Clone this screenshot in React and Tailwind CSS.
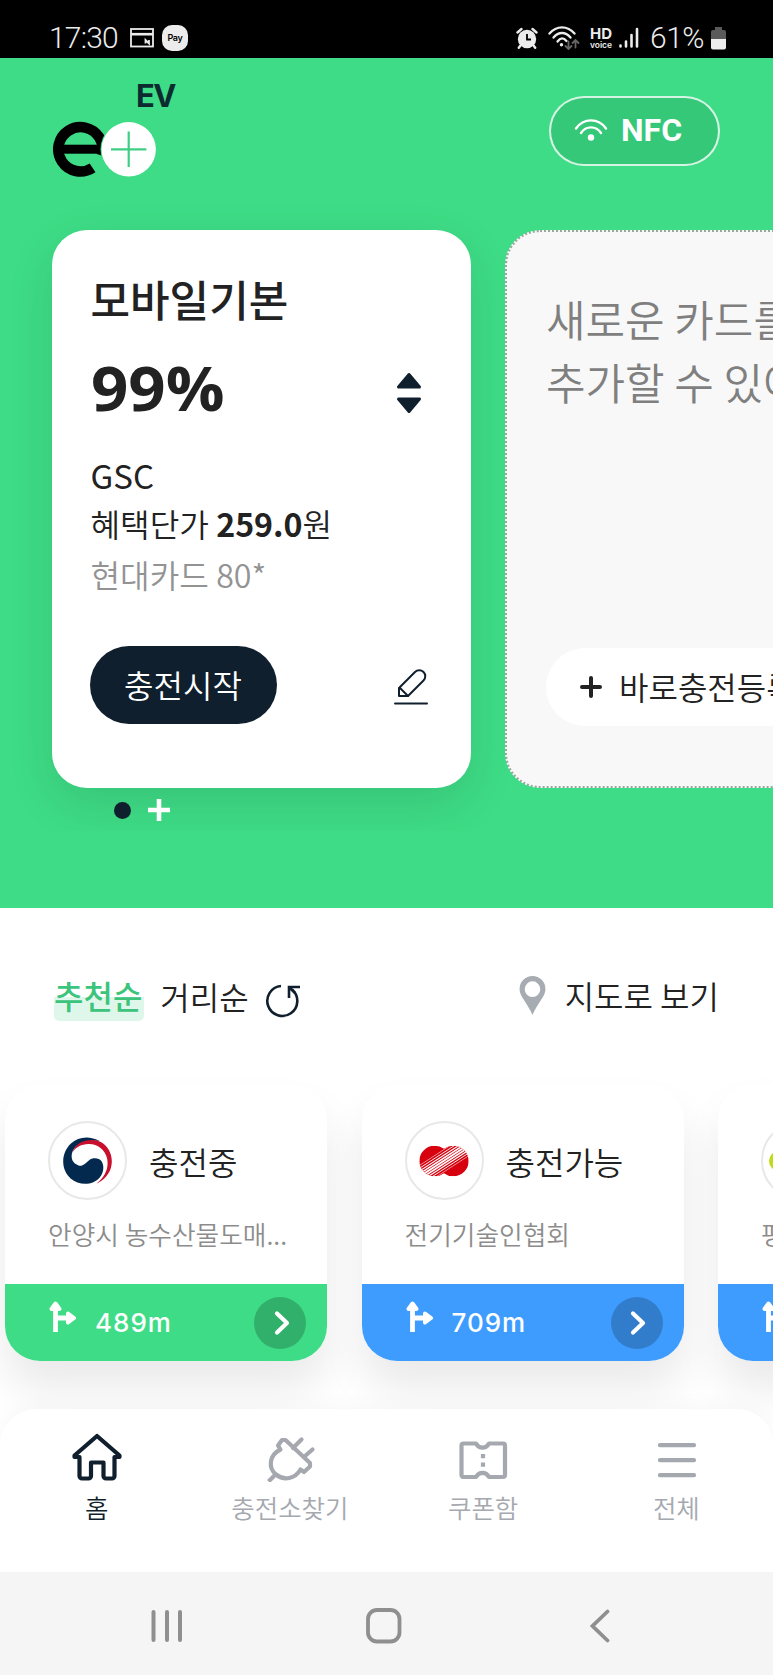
import { useState } from "react";

const KR = "font-['Noto_Sans_CJK_KR',sans-serif]";

const StatusBar = () => (
  <div className="flex h-[58px] shrink-0 items-start justify-between bg-black pl-[49px] pr-[47px] pt-[24px] font-[Roboto,sans-serif] text-[#ececec]">
    <div className="flex items-center">
      <span className="w-[81px] text-[30px] font-[350] leading-[27px] tracking-[-0.8px]">17:30</span>
      <svg width="24" height="20" viewBox="0 0 24 20" fill="none" stroke="#ececec" strokeWidth="1.8">
        <rect x="1" y="1" width="22" height="17.5" />
        <path d="M1 6.2h22" strokeWidth="2.6" />
        <path d="M15.5 15.500v-3.500l3.500 3.500v-3.500" />
      </svg>
      <span className="ml-2 flex h-[26px] w-[26px] items-center justify-center rounded-[10px] bg-[#ececec] font-[Inter,sans-serif] text-[9px] font-semibold tracking-[-0.3px] text-black">
        Pay
      </span>
    </div>

    <div className="flex items-center">
      {/* alarm */}
      <svg width="22" height="22" viewBox="0 0 22 22" fill="none">
        <circle cx="11" cy="12" r="9.2" fill="#ececec" />
        <path d="M1.5 5.5 5.5 2M20.5 5.5 16.500 2M4.500 18.500 2.800 20.800M17.500 18.500l1.700 2.300" stroke="#ececec" strokeWidth="2.400" strokeLinecap="round" />
        <path d="M11 7v5.500h4" stroke="#000" strokeWidth="1.800" />
      </svg>
      {/* wifi */}
      <svg className="ml-[10px]" width="32" height="24" viewBox="0 0 32 24" fill="none" stroke="#ececec" strokeWidth="2.300" strokeLinecap="round">
        <path d="M1.500 7.500C8.500-.8 19.500-.8 26.500 7.500" />
        <path d="M5.500 11.500c5-6 12-6 17 0" />
        <path d="M9.500 15.500c3-4 6-4 9-.5" />
        <circle cx="13.500" cy="18.800" r="1.700" fill="#ececec" stroke="none" />
        <path d="M20.500 15.500v7m-3-2.500 3 3 3-3M27.500 21.500v-7m-3 2.500 3-3 3 3" stroke="#666" strokeWidth="1.800" />
      </svg>
      <div className="ml-[9px] flex w-[24px] flex-col items-center font-[Inter,sans-serif]">
        <span className="text-[15px] font-bold leading-[15px]">HD</span>
        <span className="text-[8.500px] font-semibold leading-[9px]">voice</span>
      </div>
      <svg className="ml-[6px]" width="20" height="22" viewBox="0 0 20 22" stroke="#ececec" strokeWidth="2.600" strokeLinecap="round">
        <path d="M1.500 18.500v1M7 14.500v5M12.500 8v11.500M18 2v17.500" />
      </svg>
      <span className="ml-[11px] w-[58px] text-[30px] font-[350] leading-[27px] tracking-[-0.5px]">61%</span>
      <svg className="ml-[3px]" width="15" height="24" viewBox="0 0 15 24">
        <path d="M4 1h7v3h2a2 2 0 0 1 2 2v7H0V6a2 2 0 0 1 2-2h2z" fill="#5a5a5a" />
        <path d="M0 13h15v8.500a2 2 0 0 1-2 2H2a2 2 0 0 1-2-2z" fill="#ececec" />
      </svg>
    </div>
  </div>
);

const Logo = () => (
  <svg width="130" height="95" viewBox="0 0 130 95" fill="none">
    <text x="84" y="23" fontFamily="Inter, sans-serif" fontSize="31" fontWeight="700" letterSpacing="-1.500" fill="#0c2b30">EV</text>
    <circle cx="28.500" cy="65.300" r="22.200" stroke="#000" strokeWidth="10.600" strokeDasharray="123 17" transform="rotate(57 28.500 65.300)" />
    <rect x="10" y="60.700" width="39" height="9" fill="#000" />
    <circle cx="76.700" cy="65.300" r="28.200" fill="#3edc86" />
    <circle cx="76.700" cy="65.300" r="27.200" fill="#fff" />
    <path d="M59 65.300h35.400M76.700 47.600V83" stroke="#3fcf84" strokeWidth="2.200" />
  </svg>
);

const Header = () => (
  <header className="flex h-[142px] items-start justify-between pl-[52px] pr-[53px] pt-[26px]">
    <Logo />
    <button className="mt-[12px] flex h-[70px] w-[171px] items-center rounded-full border-2 border-white/80 bg-[#34c878] pb-[2px] pl-[23px] text-white">
      <svg width="34" height="26" viewBox="0 0 34 26" fill="none" stroke="#fff" strokeWidth="2.400" strokeLinecap="round">
        <path d="M2 11.500C9.500.700 24.500.700 32 11.500" />
        <path d="M7 16c5-7.500 15-7.500 20 0" />
        <circle cx="17" cy="20.500" r="3.200" fill="#fff" stroke="none" />
      </svg>
      <span className="ml-[13px] font-[Roboto,sans-serif] text-[32px] font-bold leading-none">NFC</span>
    </button>
  </header>
);

const ChargeCard = () => (
  <article className="flex h-[558px] w-[419px] shrink-0 flex-col rounded-[35px] bg-white px-[39px] pt-[37px] text-[#222] shadow-[0_16px_48px_rgba(0,0,0,0.11)]">
    <h2 className="text-[43px] font-medium leading-[62px]">모바일기본</h2>
    <div className="mt-[27px] flex items-center justify-between pr-[10px]">
      <p className="origin-left scale-x-[1.07] font-['Open_Sans',sans-serif] text-[61px] font-bold leading-[64px]">99%</p>
      <svg className="mt-[10px]" width="26" height="42" viewBox="0 0 26 42" fill="#101f2e" stroke="#101f2e" strokeWidth="3" strokeLinejoin="round">
        <path d="M13 2.500 23.500 15h-21zM13 39.500 23.500 27h-21z" />
      </svg>
    </div>
    <p className="mt-[32px] text-[33px] leading-[47px]">GSC</p>
    <p className="text-[32.200px] font-[350] leading-[48px]">
      혜택단가 <b>259.0</b>원
    </p>
    <p className="mt-[3px] text-[32.200px] font-[350] leading-[48px] text-[#939393]">현대카드 80*</p>
    <div className="mt-[48px] flex items-center justify-between">
      <button className="-ml-[1px] h-[78px] w-[187px] rounded-full bg-[#101f2e] pb-[3px] text-[32px] font-[350] leading-none text-white">충전시작</button>
      <svg className="mr-[4px] mt-[3px]" width="34" height="36" viewBox="0 0 34 36" fill="none" stroke="#101f2e" strokeWidth="2" strokeLinejoin="round" strokeLinecap="round">
        <path d="M5 19 21 3a5.800 5.800 0 0 1 8.500 8.500L14 27H5z" />
        <path d="m6 19 8 8" />
        <path d="M1 34.500h32" />
      </svg>
    </div>
  </article>
);

const AddCard = () => (
  <article className="flex h-[558px] w-[419px] shrink-0 flex-col rounded-[35px] border-2 border-dotted border-[#98a89f] bg-[#f8f8f8] pl-[39.500px] pt-[55px]">
    <h2 className="whitespace-nowrap text-[43px] font-[350] leading-[62.500px] text-[#7f7f7f]">
      새로운 카드를
      <br />
      추가할 수 있어요
    </h2>
    <button className="mt-[236px] flex h-[78px] w-[300px] items-center rounded-full bg-white pl-[34px] text-[32px] font-[350] leading-none text-[#222]">
      <svg width="22" height="22" viewBox="0 0 22 22" stroke="#222" strokeWidth="4" strokeLinecap="round">
        <path d="M2 11h18M11 2v18" />
      </svg>
      <span className="-mt-[3px] ml-[17px] whitespace-nowrap">바로충전등록</span>
    </button>
  </article>
);

const GovLogo = () => (
  <svg width="51" height="49" viewBox="186 198 154 146">
    <path fill="#04294f" d="M300 212C270 196 235 198 213 220C183 248 181 298 212 325C238 348 280 346 300 322C312 308 314 288 306 274C298 262 278 262 268 270C256 280 248 290 236 286C222 281 212 270 216 250C222 224 250 208 300 212Z" />
    <path fill="#c8102e" d="M218 246C228 214 268 202 300 214C330 228 342 262 334 292C328 314 312 330 290 341C318 318 328 292 322 264C316 238 292 220 266 221C244 222 228 230 218 246Z" />
  </svg>
);

// [offset from the middle, stroke width] of the white hatch lines
const stripes = [
  [-28, 1.5],
  [-21, 2.5],
  [-14, 3.5],
  [-7, 4.8],
  [0, 5.4],
  [7, 4.8],
  [14, 3.5],
  [21, 2.5],
  [28, 1.5],
];

const KeaLogo = () => (
  <svg width="50" height="32" viewBox="206 224 150 96">
    <clipPath id="kea">
      <circle cx="253" cy="272" r="46" />
      <circle cx="309" cy="272" r="46" />
    </clipPath>
    <g clipPath="url(#kea)">
      <rect x="206" y="224" width="150" height="96" fill="#d7000f" />
      <g transform="translate(281 271) rotate(-33)" stroke="#fff">
        {stripes.map(([y, w]) => (
          <path key={y} d={`M-90 ${y}H90`} strokeWidth={w} />
        ))}
      </g>
    </g>
  </svg>
);

const LimeLogo = () => (
  <svg width="64" height="20" viewBox="0 0 64 20">
    <rect width="64" height="20" rx="10" fill="#bfdb1a" />
  </svg>
);

const stations = [
  { name: "안양시 농수산물도매...", status: "충전중", distance: "489m", bar: "bg-[#3edc86]", logo: <GovLogo /> },
  { name: "전기기술인협회", status: "충전가능", distance: "709m", bar: "bg-[#3f9cff]", logo: <KeaLogo /> },
  { name: "평촌", status: "충전가능", distance: "812m", bar: "bg-[#3f9cff]", logo: <LimeLogo /> },
];

const StationCard = ({ station }) => (
  <article className="flex h-[276px] w-[322px] shrink-0 flex-col overflow-hidden rounded-[35px] bg-white shadow-[0_28px_44px_rgba(0,0,0,0.085)]">
    <div className="flex-1 pl-[43px] pt-[36px]">
      <div className="flex items-center">
        <span className="flex h-[79px] w-[79px] items-center justify-center rounded-full border-2 border-[#e8e8e8] bg-white">{station.logo}</span>
        <h3 className="ml-[22px] text-[32px] font-[350] leading-[48px] text-[#222]">{station.status}</h3>
      </div>
      <p className="mt-[15px] whitespace-nowrap text-[25.700px] font-[350] leading-[38px] text-[#8c8c8c]">{station.name}</p>
    </div>
    <div className={`flex h-[77px] items-center pl-[44px] pr-[21px] ${station.bar}`}>
      <svg className="-mt-3" width="28" height="32" viewBox="0 0 28 32" fill="#fff" stroke="#fff" strokeLinejoin="round">
        <path d="M6.500 31V8M6.500 17H18" strokeWidth="4.800" />
        <path d="M6.500 2.500 10.500 8h-8zM19 12.500l6 4.500-6 4.500z" strokeWidth="4" />
      </svg>
      <span className="ml-[18px] mt-[1px] font-[Inter,sans-serif] text-[26px] font-medium leading-none tracking-[1px] text-white">{station.distance}</span>
      <button className="ml-auto flex h-[52px] w-[52px] items-center justify-center rounded-full bg-black/20 pl-[3px]">
        <svg width="16" height="26" viewBox="0 0 16 26" fill="none" stroke="#fff" strokeWidth="4.200" strokeLinecap="round" strokeLinejoin="round">
          <path d="m3 3.500 10 9.500-10 9.500" />
        </svg>
      </button>
    </div>
  </article>
);

const SortRow = ({ sort, setSort }) => (
  <div className="flex h-[48px] items-center justify-between pl-[54px] pr-[54px] text-[32px] font-[350] leading-[48px] text-[#222]">
    <div className="flex items-start">
      {["추천순", "거리순"].map((label) => (
        <button
          key={label}
          onClick={() => setSort(label)}
          className={`mr-[16px] ${
            sort === label
              ? "h-[51px] rounded-[5px] bg-linear-to-b from-transparent from-53% to-[#dff7ea] to-53% pr-[2px] font-medium text-[#3cc47c]"
              : "pt-[2px]"
          }`}
        >
          {label}
        </button>
      ))}
      <svg className="mt-[12px]" width="36" height="36" viewBox="0 0 36 36" fill="none" stroke="#101f2e" strokeWidth="2.600">
        <path d="M16 4A15 15 0 1 0 27 7.500" />
        <path d="M35 5H24V16M24 5l6 6" />
      </svg>
    </div>
    <button className="flex items-center">
      <svg className="mt-[1px]" width="27" height="39" viewBox="0 0 27 40">
        <path fillRule="evenodd" fill="#a7acb2" d="M13.500 0A13.300 13.300 0 0 1 26.800 13.300C26.800 21 19 27 13.500 40C8 27 .200 21 .200 13.300A13.300 13.300 0 0 1 13.500 0ZM13.500 5.500A8 8 0 1 0 13.500 21.500A8 8 0 1 0 13.500 5.500Z" />
      </svg>
      <span className="ml-[19px]">지도로 보기</span>
    </button>
  </div>
);

const navItems = [
  {
    name: "홈",
    icon: (
      <svg width="52" height="50" viewBox="0 0 52 50" fill="none" stroke="currentColor" strokeWidth="4.200" strokeLinejoin="round">
        <path d="M8.500 25H3.500V23.500L26 4 48.500 23.500V25H43.500V44a2.500 2.500 0 0 1-2.500 2.500H35a2.500 2.500 0 0 1-2.500-2.500V30.500H20V44a2.500 2.500 0 0 1-2.500 2.500H11A2.500 2.500 0 0 1 8.500 44z" />
      </svg>
    ),
  },
  {
    name: "충전소찾기",
    icon: (
      <svg width="52" height="50" viewBox="0 0 52 50" fill="none" stroke="currentColor" strokeWidth="4.200" strokeLinejoin="round">
        <path d="M16.500 17.500C5 23 4 36 12 42.500C20 49 31 47 36.500 37.500L40 40 46 34.500V31L21.500 8H18L14 13.500z" />
        <path d="M4.500 49.500l6.500-6.500" />
        <path d="M29 16l8.500-8.500M40.500 24.500l8-7" strokeLinecap="round" />
      </svg>
    ),
  },
  {
    name: "쿠폰함",
    icon: (
      <svg width="52" height="50" viewBox="0 0 52 50" fill="none" stroke="currentColor" strokeWidth="4.200" strokeLinejoin="round">
        <path d="M6.500 11.500H19C22 17 29 17 32 11.500H46a2 2 0 0 1 2 2V43a2 2 0 0 1-2 2H32C29 39.500 22 39.500 19 45H6.500a2 2 0 0 1-2-2V13.500a2 2 0 0 1 2-2z" />
        <path d="M26 22v4.200M26 30.500v4.200" />
      </svg>
    ),
  },
  {
    name: "전체",
    icon: (
      <svg width="52" height="50" viewBox="0 0 52 50" fill="none" stroke="currentColor" strokeWidth="4.200" strokeLinecap="round">
        <path d="M10 13.200h34M10 28.200h34M10 43.200h34" />
      </svg>
    ),
  },
];

const BottomNav = () => (
  <nav className="relative -mt-[36px] grid h-[163px] shrink-0 grid-cols-4 rounded-t-[36px] bg-white shadow-[0_-4px_20px_rgba(0,0,0,0.03)]">
    {navItems.map((item, i) => (
      <button key={item.name} className={`flex flex-col items-center pt-[23px] ${i === 0 ? "text-[#101f2e]" : "text-[#a5a9af]"}`}>
        {item.icon}
        <span className="mt-[6px] text-[25.500px] font-[350] leading-[38px]">{item.name}</span>
      </button>
    ))}
  </nav>
);

const SystemBar = () => (
  <div className="relative flex h-[103px] shrink-0 items-center bg-[#f5f5f5] pl-[151px] pt-[4px]">
    <svg width="32" height="34" viewBox="0 0 32 34" stroke="#8f8f8f" strokeWidth="4" strokeLinecap="round">
      <path d="M2.500 3v28M16 3v28M29 3v28" />
    </svg>
    <svg className="ml-[183px]" width="36" height="36" viewBox="0 0 36 36" fill="none" stroke="#8f8f8f" strokeWidth="3.800">
      <rect x="2" y="2" width="31.500" height="31.500" rx="9" />
    </svg>
    <svg className="ml-[188px]" width="20" height="34" viewBox="0 0 20 34" fill="none" stroke="#8f8f8f" strokeWidth="3.800" strokeLinecap="round">
      <path d="M17.500 2.500 2.500 17l15 14.500" />
    </svg>
  </div>
);

export default function App() {
  const [sort, setSort] = useState("추천순");

  return (
    <div className={`flex h-[1675px] w-full flex-col overflow-hidden bg-white ${KR}`}>
      <StatusBar />

      <section className="h-[850px] shrink-0 bg-[#3edc86]">
        <Header />
        <div className="h-[631px] overflow-hidden">
          <div className="flex gap-[34px] pl-[51.500px] pt-[30px]">
            <ChargeCard />
            <AddCard />
          </div>
          <div className="mt-[11px] flex items-center pl-[114px]">
            <span className="h-[17px] w-[17px] rounded-full bg-[#101f2e]" />
            <svg className="ml-[17px]" width="22" height="22" viewBox="0 0 22 22" stroke="#fff" strokeWidth="4.600">
              <path d="M0 11h22M11 0v22" />
            </svg>
          </div>
        </div>
      </section>

      <section className="shrink-0 pt-[63px]">
        <SortRow sort={sort} setSort={setSort} />
        <div className="mt-[20px] flex h-[406px] gap-[34.500px] overflow-hidden pl-[5px] pt-[46px]">
          {stations.map((station) => (
            <StationCard key={station.name} station={station} />
          ))}
        </div>
      </section>

      <BottomNav />
      <SystemBar />
    </div>
  );
}
